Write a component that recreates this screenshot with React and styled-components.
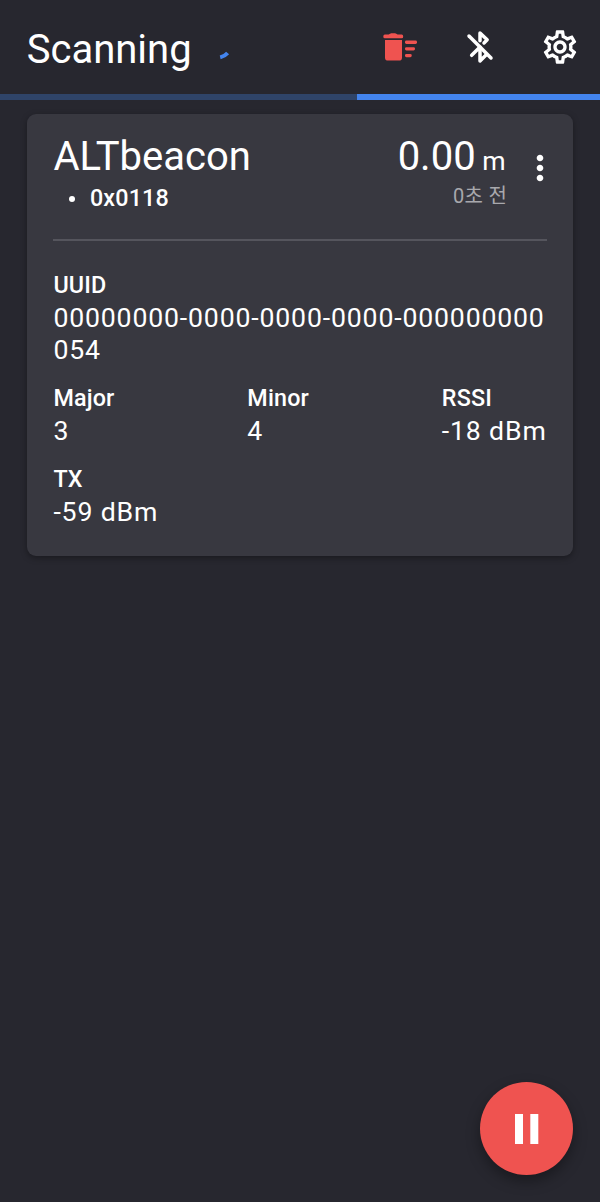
import React from 'react';
import styled, { createGlobalStyle } from 'styled-components';
import { MdOutlineSettings, MdMoreVert } from 'react-icons/md';

const GlobalStyle = createGlobalStyle`
  * {
    box-sizing: border-box;
    margin: 0;
    padding: 0;
  }
  body {
    background: #27272f;
    color: #fff;
    font-family: Roboto, 'Noto Sans CJK KR', sans-serif;
  }
  button {
    border: 0;
    background: none;
    color: inherit;
    cursor: pointer;
  }
`

const Screen = styled.div`
  display: flex;
  flex-direction: column;
  height: 100vh;
  min-height: 1202px;
  overflow: hidden;
`

const Header = styled.header`
  display: flex;
  align-items: center;
  height: 94.4px;
  padding-left: 26.7px;
`

const Title = styled.h1`
  font-size: 40px;
  font-weight: 400;
  line-height: 48px;
  padding-top: 6px;
`

const Spinner = styled.svg`
  width: 32px;
  height: 32px;
  margin-left: 10px;
`

const Actions = styled.div`
  display: flex;
  margin-left: auto;
`

const IconButton = styled.button`
  display: flex;
  align-items: center;
  justify-content: center;
  width: 80px;
  height: 80px;
  color: ${props => props.$color || '#fff'};
  svg {
    width: 40px;
    height: 40px;
  }
`

const Progress = styled.div`
  display: flex;
  justify-content: flex-end;
  height: 5.2px;
  background: #2f4469;
`

const ProgressBar = styled.div`
  width: 243px;
  background: #4384ee;
`

const Card = styled.section`
  margin: 14.2px 26.7px 0;
  padding: 0 26.7px;
  height: 441.8px;
  border-radius: 9px;
  background: #383840;
  box-shadow: 0 2px 6px rgba(0, 0, 0, 0.35);
`

const CardTop = styled.div`
  display: flex;
  height: 127.2px;
  padding-top: 19px;
  border-bottom: 2px solid #55555d;
`

const CardInfo = styled.div`
  flex: 1;
`

const CardTitle = styled.h2`
  font-size: 40px;
  font-weight: 400;
  line-height: 48px;
`

const Maker = styled.p`
  display: flex;
  align-items: center;
  gap: 15px;
  padding-left: 15.5px;
  font-size: 23.33px;
  font-weight: 500;
  line-height: 34px;
  letter-spacing: 0.17px;
  &::before {
    content: '';
    width: 6px;
    height: 6px;
    margin-top: 3px;
    border-radius: 50%;
    background: #fff;
  }
`

const Distance = styled.div`
  text-align: right;
`

const Meter = styled.p`
  font-size: 40px;
  line-height: 48px;
  span {
    font-size: 26.67px;
  }
`

const Ago = styled.p`
  color: #a8a8ad;
  font-size: 20px;
  line-height: 30px;
  letter-spacing: 0.3px;
  margin: -4px -1.5px 0 0;
`

const MoreButton = styled.button`
  display: flex;
  align-items: center;
  justify-content: center;
  width: 40px;
  height: 40px;
  margin: 15px -13px 0 14px;
  svg {
    width: 40px;
    height: 40px;
    flex-shrink: 0;
  }
`

const FieldRow = styled.div`
  display: flex;
  justify-content: space-between;
  padding-top: ${props => props.$top};
`

const Label = styled.p`
  font-size: 23.33px;
  font-weight: 500;
  line-height: 34px;
  letter-spacing: 0.17px;
`

const Value = styled.p`
  font-size: 26.67px;
  line-height: 32px;
  letter-spacing: 0.83px;
  word-break: break-all;
`

const Fab = styled.button`
  display: flex;
  align-items: center;
  justify-content: center;
  align-self: flex-end;
  width: 93.4px;
  height: 93.4px;
  margin: auto 26.6px 26.7px 0;
  border-radius: 50%;
  background: #ef5350;
  box-shadow: 0 6px 14px rgba(0, 0, 0, 0.35);
`

const DeleteSweepIcon = () => (
  <svg viewBox="0 0 40 40" fill="currentColor">
    <path d="M4.800 7.500H8.700L10 6.700Q10.600 6.300 11.300 6.300H15q.7 0 1.300.4L17.600 7.500h4.100q1.500 0 1.500 1.900t-1.500 1.900H4.800Q3.300 11.300 3.300 9.400T4.800 7.500z" />
    <path d="M5 13h17v17.400q0 3.200-3.200 3.200H8.200Q5 33.600 5 30.400z" />
    <rect x="25" y="13.600" width="12" height="3.300" rx="1.400" />
    <rect x="25" y="20.200" width="10" height="3.300" rx="1.400" />
    <rect x="25" y="26.900" width="6.700" height="3.300" rx="1.400" />
  </svg>
);

const BluetoothOffIcon = () => (
  <svg viewBox="0 0 24 24" fill="none" stroke="currentColor" strokeWidth="2.1" strokeLinecap="round" strokeLinejoin="round">
    <path d="M5.400 5.400 18.600 18.600" />
    <path d="M7 17 12 12V20.400L15.600 16.800" />
    <path d="M12 8.300V3.600L16.300 7.700 14.400 9.600" />
  </svg>
);

const Field = ({ label, value }) => (
  <div>
    <Label>{label}</Label>
    <Value>{value}</Value>
  </div>
);

const BeaconCard = ({ beacon }) => {
  return (
    <Card>
      <CardTop>
        <CardInfo>
          <CardTitle>{beacon.type}</CardTitle>
          <Maker>{beacon.maker}</Maker>
        </CardInfo>
        <Distance>
          <Meter>{beacon.distance}<span> m</span></Meter>
          <Ago>{beacon.ago}</Ago>
        </Distance>
        <MoreButton aria-label="more"><MdMoreVert /></MoreButton>
      </CardTop>
      <FieldRow $top="27px">
        <Field label="UUID" value={beacon.uuid} />
      </FieldRow>
      <FieldRow $top="15px">
        <Field label="Major" value={beacon.major} />
        <Field label="Minor" value={beacon.minor} />
        <Field label="RSSI" value={beacon.rssi} />
      </FieldRow>
      <FieldRow $top="15px">
        <Field label="TX" value={beacon.tx} />
      </FieldRow>
    </Card>
  );
};

const beacon = {
  type: 'ALTbeacon',
  maker: '0x0118',
  distance: '0.00',
  ago: '0초 전',
  uuid: '00000000-0000-0000-0000-000000000054',
  major: '3',
  minor: '4',
  rssi: '-18 dBm',
  tx: '-59 dBm',
}

const App = () => {
  return (
    <>
      <GlobalStyle />
      <Screen>
        <Header>
          <Title>Scanning</Title>
          <Spinner viewBox="0 0 32 32" fill="none">
            <path d="M18.200 26.400Q22.600 25.400 25.600 22" stroke="#4384ee" strokeWidth="4" />
          </Spinner>
          <Actions>
            <IconButton $color="#ef5350" aria-label="clear"><DeleteSweepIcon /></IconButton>
            <IconButton aria-label="bluetooth"><BluetoothOffIcon /></IconButton>
            <IconButton aria-label="settings"><MdOutlineSettings /></IconButton>
          </Actions>
        </Header>
        <Progress>
          <ProgressBar />
        </Progress>
        <BeaconCard beacon={beacon} />
        <Fab aria-label="pause">
          <svg width="24" height="30" viewBox="0 0 24 30" fill="#fff">
            <rect width="8" height="30" />
            <rect x="15.300" width="8" height="30" />
          </svg>
        </Fab>
      </Screen>
    </>
  );
};

export default App;
